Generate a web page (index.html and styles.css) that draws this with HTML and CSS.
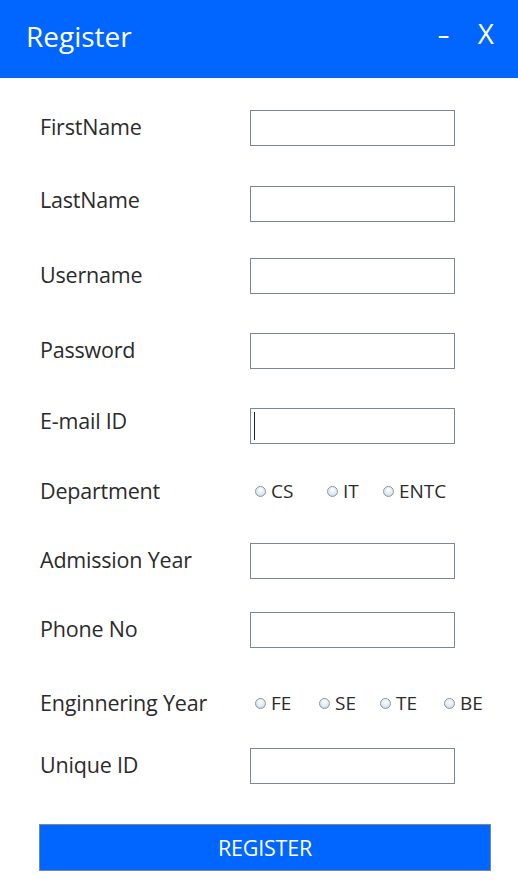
FILE: index.html
```html
<!DOCTYPE html>
<html>
<head>
<meta charset="utf-8">
<link rel="stylesheet" href="styles.css">
</head>
<body>
<div class="window">
  <header class="titlebar">
    <span class="title">Register</span>
    <span class="controls"><span class="min">-</span><span class="close">X</span></span>
  </header>
  <form class="form">
    <div class="row r1"><label>FirstName</label><input type="text" class="field"></div>
    <div class="row r2"><label>LastName</label><input type="text" class="field"></div>
    <div class="row r3"><label>Username</label><input type="text" class="field"></div>
    <div class="row r4"><label>Password</label><input type="password" class="field"></div>
    <div class="row r5"><label>E-mail ID</label><div class="field focused"><span class="caret"></span></div></div>
    <div class="row r6"><label>Department</label>
      <div class="radios dept">
        <span class="opt o-cs"><span class="dot"></span>CS</span>
        <span class="opt o-it"><span class="dot"></span>IT</span>
        <span class="opt"><span class="dot"></span>ENTC</span>
      </div>
    </div>
    <div class="row r7"><label>Admission Year</label><input type="text" class="field"></div>
    <div class="row r8"><label>Phone No</label><input type="text" class="field"></div>
    <div class="row r9"><label>Enginnering Year</label>
      <div class="radios year">
        <span class="opt o-fe"><span class="dot"></span>FE</span>
        <span class="opt o-se"><span class="dot"></span>SE</span>
        <span class="opt o-te"><span class="dot"></span>TE</span>
        <span class="opt"><span class="dot"></span>BE</span>
      </div>
    </div>
    <div class="row r10"><label>Unique ID</label><input type="text" class="field"></div>
    <button type="button" class="submit">REGISTER</button>
  </form>
</div>
</body>
</html>
```
FILE: styles.css
```css
html, body {
  margin: 0;
  padding: 0;
  background: #ffffff;
}
body {
  font-family: "Open Sans", "Noto Sans", sans-serif;
  color: #2b2b2b;
}
.window {
  width: 518px;
  height: 882px;
  overflow: hidden;
}
.titlebar {
  height: 78px;
  background: #0066ff;
  color: #ffffff;
  display: flex;
  align-items: center;
  justify-content: space-between;
  padding: 0 24px 0 26px;
  box-sizing: border-box;
}
.title {
  font-size: 28px;
  letter-spacing: 0;
  margin-top: -6px;
}
.controls {
  display: flex;
  gap: 30px;
  font-size: 28px;
  margin-top: -12px;
}
.min {
  transform: scaleX(1.4);
}
.form {
  padding: 12px 0 0 40px;
  display: flex;
  flex-direction: column;
}
.row {
  display: flex;
  align-items: center;
}
.row label {
  width: 210px;
  font-size: 21.5px;
  letter-spacing: -0.2px;
  flex: none;
  margin-top: -3px;
}
.r1 { height: 75px; }
.r2 { height: 78px; }
.r3 { height: 65px; }
.r4 { height: 85px; }
.r5 { height: 65px; }
.r6 { height: 68px; }
.r7 { height: 69px; }
.r8 { height: 69px; }
.r9 { height: 80px; }
.r10 { height: 43px; }
.r2 label { margin-top: -9px; }
.r5 label { margin-top: -10px; }
.field {
  width: 205px;
  height: 36px;
  box-sizing: border-box;
  border: 1px solid #7a8796;
  background: #fff;
  margin: 0;
  padding: 0;
  display: block;
  font: inherit;
}
.focused {
  position: relative;
}
.caret {
  position: absolute;
  left: 3px;
  top: 3px;
  width: 1px;
  height: 28px;
  background: #222;
}
.radios {
  display: flex;
  align-items: center;
  font-size: 19px;
  padding-left: 5px;
  margin-top: -2px;
}
.opt {
  display: flex;
  align-items: center;
}
.dot {
  width: 9px;
  height: 9px;
  border-radius: 50%;
  border: 1px solid #8a98a8;
  background: radial-gradient(circle at 50% 35%, #ffffff 0%, #dfe6ee 60%, #b7c4d3 100%);
  margin-right: 5px;
  flex: none;
}
.o-cs { width: 72px; }
.o-it { width: 56px; }
.o-fe { width: 64px; }
.o-se { width: 61px; }
.o-te { width: 64px; }
.submit {
  margin-top: 37px;
  width: 452px;
  height: 47px;
  margin-left: -1px;
  background: #0066ff;
  color: #ffffff;
  border: 1px solid #7a8796;
  font-family: "Open Sans", "Noto Sans", sans-serif;
  font-size: 21.5px;
  letter-spacing: -0.2px;
  padding: 0;
}
```
